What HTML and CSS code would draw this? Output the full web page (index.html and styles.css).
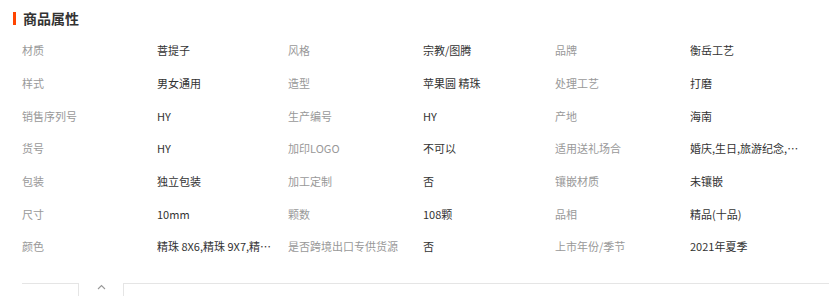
FILE: index.html
```html
<!DOCTYPE html>
<html lang="zh-CN">
<head>
<meta charset="utf-8">
<link rel="stylesheet" href="styles.css">
</head>
<body>
<div class="attrs">
  <h2 class="title"><span class="bar"></span>商品属性</h2>
  <div class="grid">
    <div class="k">材质</div><div class="v">菩提子</div>
    <div class="k">风格</div><div class="v">宗教/图腾</div>
    <div class="k">品牌</div><div class="v">衡岳工艺</div>

    <div class="k">样式</div><div class="v">男女通用</div>
    <div class="k">造型</div><div class="v">苹果圆 精珠</div>
    <div class="k">处理工艺</div><div class="v">打磨</div>

    <div class="k">销售序列号</div><div class="v">HY</div>
    <div class="k">生产编号</div><div class="v">HY</div>
    <div class="k">产地</div><div class="v">海南</div>

    <div class="k">货号</div><div class="v">HY</div>
    <div class="k">加印LOGO</div><div class="v">不可以</div>
    <div class="k">适用送礼场合</div><div class="v">婚庆,生日,旅游纪念,教师节,毕业</div>

    <div class="k">包装</div><div class="v">独立包装</div>
    <div class="k">加工定制</div><div class="v">否</div>
    <div class="k">镶嵌材质</div><div class="v">未镶嵌</div>

    <div class="k">尺寸</div><div class="v">10mm</div>
    <div class="k">颗数</div><div class="v">108颗</div>
    <div class="k">品相</div><div class="v">精品(十品)</div>

    <div class="k">颜色</div><div class="v">精珠 8X6,精珠 9X7,精珠 10X8</div>
    <div class="k">是否跨境出口专供货源</div><div class="v">否</div>
    <div class="k">上市年份/季节</div><div class="v">2021年夏季</div>
  </div>
  <div class="foot">
    <div class="foot-left"></div>
    <div class="foot-toggle">
      <svg width="9" height="6" viewBox="0 0 9 6"><path d="M1 5 L4.5 1.5 L8 5" fill="none" stroke="#999" stroke-width="1.1"/></svg>
    </div>
    <div class="foot-right"></div>
  </div>
</div>
</body>
</html>
```

FILE: styles.css
```css
html, body {
  margin: 0;
  padding: 0;
  background: #fff;
}
body {
  font-family: "Noto Sans CJK SC", "Microsoft YaHei", sans-serif;
  font-size: 11px;
  color: #333;
}
.attrs {
  width: 829px;
}
.title {
  display: flex;
  align-items: center;
  margin: 0;
  padding: 9px 0 0 13px;
  height: 19px;
  font-size: 14px;
  font-weight: 700;
  color: #333;
  line-height: 19px;
}
.bar {
  display: inline-block;
  width: 3px;
  height: 13px;
  background: #ff4400;
  margin-right: 7px;
}
.grid {
  display: grid;
  grid-template-columns: 135px 131px 135px 132px 135px 1fr;
  grid-auto-rows: 32.7px;
  align-items: center;
  margin: 6px 0 0 22px;
}
.k {
  color: #999;
  white-space: nowrap;
  line-height: 16px;
}
.v {
  color: #333;
  white-space: nowrap;
  overflow: hidden;
  text-overflow: ellipsis;
  max-width: 118px;
  line-height: 16px;
}
.foot {
  display: flex;
  margin: 20px 0 0 22px;
  height: 14px;
}
.foot-left {
  width: 56px;
  border-top: 1px solid #e5e5e5;
  border-right: 1px solid #e5e5e5;
}
.foot-toggle {
  width: 44px;
  display: flex;
  justify-content: center;
  align-items: flex-start;
  padding-top: 1px;
}
.foot-right {
  flex: 1;
  border-top: 1px solid #e5e5e5;
  border-left: 1px solid #e5e5e5;
}
```
